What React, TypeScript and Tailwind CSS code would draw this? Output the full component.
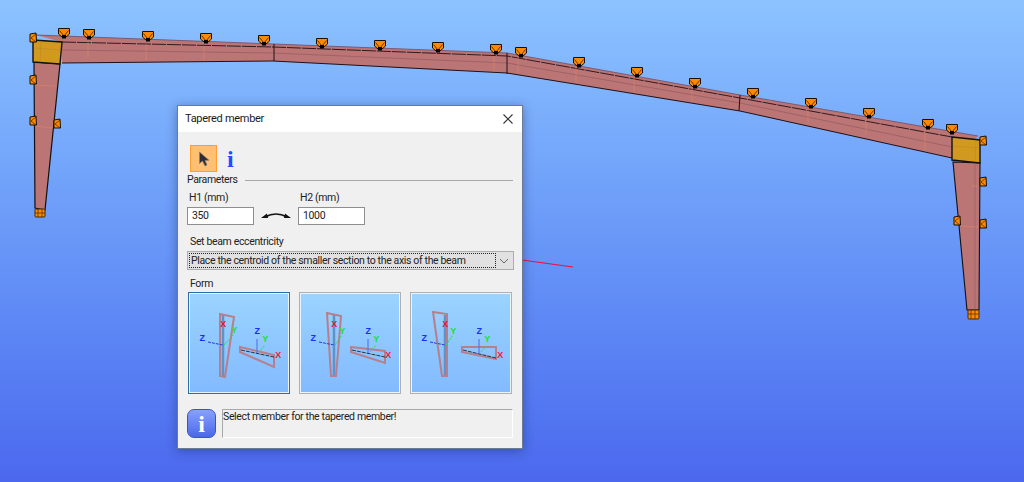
const topClips: [number, number][] = [
  [64, 33], [89, 34], [148, 36], [206, 38], [264, 40], [322, 43], [380, 45], [438, 47], [496, 49],
  [521, 52], [579, 62], [637, 72], [695, 83], [753, 93], [811, 103], [869, 113], [928, 124], [952, 129],
]

const sideClips: [number, number][] = [
  [33, 80], [33, 121], [57, 124], [983, 182], [983, 224], [957, 221], [33, 38], [983, 141],
]

// orange clip with the black bolt under it
function TopClip({ x, y }: { x: number; y: number }) {
  return (
    <g transform={`translate(${x} ${y})`}>
      <path d="M-5.5 -4.5 L5.5 -4.5 L5.5 1 L2 4 L-2 4 L-5.5 1 Z" fill="#ff8a00" stroke="#1a1000" strokeWidth="1" />
      <path d="M-4.5 -2.5 L0 3 L4.5 -2.5" fill="none" stroke="#3a2000" strokeWidth="0.8" />
      <rect x="-2" y="2" width="4" height="3.5" fill="#000" />
    </g>
  )
}

function SideClip({ x, y }: { x: number; y: number }) {
  return (
    <g transform={`translate(${x} ${y})`}>
      <path d="M-3 -4 L3 -5 L3.5 4 L-3 4 Z" fill="#ff8a00" stroke="#1a1000" strokeWidth="1" />
      <path d="M3 -4 L-2 0 L3 4" fill="none" stroke="#3a2000" strokeWidth="0.7" />
    </g>
  )
}

function FrameDrawing() {
  return (
    <svg className="absolute inset-0" width="1024" height="482" viewBox="0 0 1024 482">
      {/* left column */}
      <path d="M34 62 L60 64 L45 210 L35 208 Z" fill="#bb7575" stroke="#111" strokeWidth="1.2" />
      <path d="M35 85 L56 86 M35 126 L53 128" stroke="#e58a60" strokeWidth="0.5" />
      {/* rafters */}
      <path
        d="M36 35 L273 44 L507 53 L740 95 L978 136 L952 158 L740 111 L507 73 L273 61 L62 63 L62 42 Z"
        fill="#bb7575"
      />
      <path d="M36 35 L273 44 L507 53 L740 95 L978 136" fill="none" stroke="#7d5a70" strokeWidth="1" />
      <path d="M62 42 L273 47 L507 56 L740 98 L952 137" fill="none" stroke="#201018" strokeWidth="0.9" strokeDasharray="14 1" />
      <path d="M62 50 L273 53 L507 63 L740 103 L952 147" fill="none" stroke="#925a62" strokeWidth="0.7" />
      <path d="M62 63 L273 61 L507 73 L740 111 L952 158" fill="none" stroke="#201018" strokeWidth="1" />
      <path d="M274 44 L274 61 M507 53 L507 74 M740 95 L739 111" stroke="#201018" strokeWidth="1" />
      <path
        d="M88 42 L88 58 M146 44 L146 60 M204 46 L204 61 M494 56 L494 72 M518 57 L518 73 M576 66 L576 83 M634 77 L634 92 M692 87 L692 102 M808 109 L808 124 M866 118 L866 135 M925 130 L925 150"
        stroke="#e58a60"
        strokeWidth="0.5"
      />
      {/* right column */}
      <path d="M953 162 L980 163 L979 310 L967 310 Z" fill="#bb7575" stroke="#111" strokeWidth="1.1" />
      <path d="M975 163 L975 310" stroke="#925a62" strokeWidth="0.6" />
      <path d="M961 226 L978 227 M972 186 L979 186" stroke="#e58a60" strokeWidth="0.5" />
      {/* haunch blocks */}
      <path d="M33 40 L62 42 L60 64 L33 62 Z" fill="#d19a1e" stroke="#111" strokeWidth="1.4" />
      <path d="M41 41 L40 62 M34 48 L61 50" stroke="#b98a25" strokeWidth="0.6" />
      <path d="M952 137 L980 140 L980 163 L952 160 Z" fill="#d19a1e" stroke="#111" strokeWidth="1.4" />
      <path d="M976 140 L975 162 M953 146 L979 148" stroke="#b98a25" strokeWidth="0.6" />
      {topClips.map(([x, y]) => (
        <TopClip key={x} x={x} y={y} />
      ))}
      {sideClips.map(([x, y], i) => (
        <SideClip key={i} x={x} y={y} />
      ))}
      {/* column feet */}
      <rect x="35" y="209" width="10" height="8" rx="1" fill="#ff8a00" stroke="#4a2a00" strokeWidth="1" />
      <path d="M38 209 L38 217 M42 209 L42 217 M35 213 L45 213" stroke="#4a2a00" strokeWidth="0.7" />
      <rect x="968" y="310" width="11" height="9" rx="1" fill="#ff8a00" stroke="#4a2a00" strokeWidth="1" />
      <path d="M971 310 L971 319 M975 310 L975 319 M968 314 L979 314" stroke="#4a2a00" strokeWidth="0.7" />
      {/* global x axis sticking out behind the dialog */}
      <path d="M522 260 L573 267" stroke="#f0103a" strokeWidth="1.2" />
    </svg>
  )
}

const forms = [
  {
    column: '32,22 46,25 37,85 32,84',
    beam: '52,55 86,63 86,75 52,60',
    axisEnd: '86,65',
    y: [46, 38],
    xLabel: [90, 63],
  },
  {
    column: '28,21 42,24 37,84 32,84',
    beam: '52,55 86,59 86,71 52,60',
    axisEnd: '86,65',
    y: [43, 39],
    xLabel: [89, 63],
  },
  {
    column: '23,20 37,22 37,84 32,84',
    beam: '52,55 86,55 86,67 52,60',
    axisEnd: '86,66',
    y: [43, 39],
    xLabel: [90, 63],
  },
]

function AxisLabel({ x, y, color, children }: { x: number; y: number; color: string; children: string }) {
  return (
    <text
      x={x}
      y={y + 3}
      textAnchor="middle"
      fill={color}
      fontSize="9"
      fontWeight="700"
      fontFamily="Liberation Sans, sans-serif"
    >
      {children}
    </text>
  )
}

function FormThumb({ index, selected }: { index: number; selected?: boolean }) {
  const form = forms[index]
  return (
    <div
      className={`h-[102px] w-[102px] border border-solid bg-gradient-to-b from-[#9bd4ff] to-[#82baff] shadow-[inset_0_0_0_1px_#e8f4ff] ${
        selected ? 'border-[#2a6ea8]' : 'border-[#b0b0b0]'
      }`}
    >
      <svg width="100" height="100" viewBox="1 1 100 100">
        <line x1="35" y1="23" x2="35" y2="85" stroke="#5f93c8" strokeWidth="2.5" />
        <polygon points={form.column} fill="none" stroke="#b77f8c" strokeWidth="2" />
        <line x1="20" y1="50" x2="35" y2="53" stroke="#2a3be0" strokeWidth="1" strokeDasharray="3 1" />
        <line x1="36" y1="53" x2={form.y[0]} y2={form.y[1] + 4} stroke="#20e040" strokeWidth="1" strokeDasharray="2 1" />
        <AxisLabel x={35} y={32} color="#e8102a">X</AxisLabel>
        <AxisLabel x={form.y[0]} y={form.y[1]} color="#18e030">Y</AxisLabel>
        <AxisLabel x={14} y={46} color="#1a30f0">Z</AxisLabel>
        <polygon points={form.beam} fill="none" stroke="#b77f8c" strokeWidth="2" />
        <line x1="69" y1="61" x2="69" y2="47" stroke="#5a78f0" strokeWidth="1.2" />
        <line x1="71" y1="60" x2="77" y2="53" stroke="#20e040" strokeWidth="1" strokeDasharray="2 1" />
        <polyline points={`53,58 ${form.axisEnd}`} fill="none" stroke="#222" strokeWidth="0.9" strokeDasharray="4 1" />
        <AxisLabel x={69} y={39} color="#1a30f0">Z</AxisLabel>
        <AxisLabel x={77} y={47} color="#18e030">Y</AxisLabel>
        <AxisLabel x={form.xLabel[0]} y={form.xLabel[1]} color="#f01838">X</AxisLabel>
      </svg>
    </div>
  )
}

export default function App() {
  return (
    <div className="relative h-[482px] w-[1024px] overflow-hidden bg-gradient-to-b from-[#8cc3ff] to-[#4b68ee]">
      <FrameDrawing />

      {/* dialog window */}
      <div
        className="absolute left-[177px] top-[105px] flex h-[344px] w-[346px] flex-col border border-solid border-[#6d7a95] bg-[#f0f0f0] text-[10.5px] leading-[14px] tracking-[-0.35px] text-[#222] shadow-[0_2px_10px_rgba(30,40,90,0.45)]"
        style={{ fontFamily: 'Roboto, "Liberation Sans", sans-serif' }}
      >
        <div className="flex h-[26px] shrink-0 items-center justify-between bg-white pl-[7px] pr-[9px] text-[11px] tracking-[-0.3px] text-[#1a1a1a]">
          <span>Tapered member</span>
          <svg width="10" height="10" viewBox="0 0 10 10">
            <path d="M0.5 0.5 L9.5 9.5 M9.5 0.5 L0.5 9.5" stroke="#333" strokeWidth="1.1" />
          </svg>
        </div>

        <div className="flex min-h-0 flex-1 flex-col pl-[9px] pr-[9px]">
          {/* toolbar */}
          <div className="mt-[13px] flex items-center pl-[3px]">
            <div className="flex h-[27px] w-[27px] items-center justify-center border border-solid border-[#ff9f2e] bg-[#ffc073]">
              <svg width="12" height="16" viewBox="0 0 12 16">
                <path d="M1.5 1 L1.5 12.5 L4.5 10 L7 15 L9 14 L7 9.5 L11 9.2 Z" fill="#2d2d33" stroke="#8a8078" strokeWidth="0.7" />
              </svg>
            </div>
            <span
              className="ml-[10px] text-[24px] font-bold leading-[24px] tracking-normal text-[#1a50ff]"
              style={{ fontFamily: '"Liberation Serif", serif' }}
            >
              i
            </span>
          </div>

          <div className="mt-px flex h-[14px] items-center">
            <span>Parameters</span>
            <div className="ml-[7px] h-px flex-1 bg-[#a8a8a8]" />
          </div>

          <div className="mt-[4px] flex items-start">
            <div className="flex w-[67px] flex-col">
              <span className="pl-[2px]">H1 (mm)</span>
              <div className="mt-[2px] flex h-[18px] items-center border border-solid border-[#8e8e8e] bg-white pl-[4px]">350</div>
            </div>
            <svg className="ml-[7px] mt-[19px]" width="30" height="10" viewBox="0 0 30 10">
              <path d="M4 7 Q15 1 26 7" fill="none" stroke="#111" strokeWidth="1.5" />
              <path d="M0 8 L6 3.5 L7 8 Z M30 8 L24 3.5 L23 8 Z" fill="#111" />
            </svg>
            <div className="ml-[7px] flex w-[67px] flex-col">
              <span className="pl-[2px]">H2 (mm)</span>
              <div className="mt-[2px] flex h-[18px] items-center border border-solid border-[#8e8e8e] bg-white pl-[4px]">1000</div>
            </div>
          </div>

          <div className="mt-[10px] pl-[3px]">Set beam eccentricity</div>
          <div className="mt-[2px] flex h-[19px] w-[327px] items-center border border-solid border-[#adadad] bg-[#e1e1e1] p-px">
            <div className="flex h-full flex-1 items-center whitespace-nowrap border border-dotted border-[#222] pl-px">
              Place the centroid of the smaller section to the axis of the beam
            </div>
            <svg className="mx-[3px]" width="10" height="6" viewBox="0 0 10 6">
              <path d="M1 1 L5 5 L9 1" fill="none" stroke="#666" strokeWidth="1" />
            </svg>
          </div>

          <div className="mt-[7px] pl-[3px]">Form</div>
          <div className="mt-px flex gap-[9px] pl-px">
            <FormThumb index={0} selected />
            <FormThumb index={1} />
            <FormThumb index={2} />
          </div>

          {/* status */}
          <div className="mt-[15px] flex items-stretch">
            <div
              className="flex h-[29px] w-[29px] items-center justify-center rounded-[7px] border border-solid border-[#3d55c0] bg-gradient-to-b from-[#8aa0ff] to-[#4a68e8] text-[24px] font-bold leading-none tracking-normal text-white"
              style={{ fontFamily: '"Liberation Serif", serif' }}
            >
              i
            </div>
            <div className="ml-[6px] h-[29px] flex-1 border-b border-l border-r border-t border-solid border-b-white border-l-[#a8a8a8] border-r-white border-t-[#a8a8a8]">
              Select member for the tapered member!
            </div>
          </div>
        </div>
      </div>
    </div>
  )
}
